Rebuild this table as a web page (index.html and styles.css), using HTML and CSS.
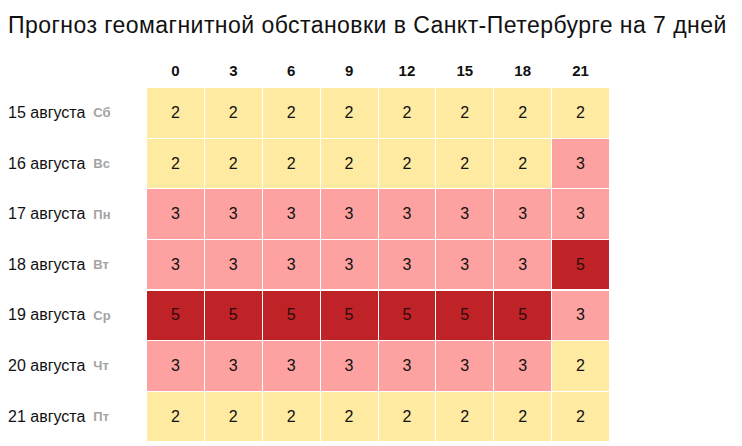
FILE: index.html
```html
<!DOCTYPE html>
<html lang="ru">
<head>
<meta charset="utf-8">
<title>Прогноз геомагнитной обстановки</title>
<link rel="stylesheet" href="styles.css">
</head>
<body>
<div class="page">
  <h1 class="title">Прогноз геомагнитной обстановки в Санкт-Петербурге на 7 дней</h1>
  <div class="grid">
    <div class="corner"></div>
    <div class="hour">0</div><div class="hour">3</div><div class="hour">6</div><div class="hour">9</div><div class="hour">12</div><div class="hour">15</div><div class="hour">18</div><div class="hour">21</div>

    <div class="day">15 августа <span class="wd">Сб</span></div>
    <div class="c k2">2</div><div class="c k2">2</div><div class="c k2">2</div><div class="c k2">2</div><div class="c k2">2</div><div class="c k2">2</div><div class="c k2">2</div><div class="c k2">2</div>

    <div class="day">16 августа <span class="wd">Вс</span></div>
    <div class="c k2">2</div><div class="c k2">2</div><div class="c k2">2</div><div class="c k2">2</div><div class="c k2">2</div><div class="c k2">2</div><div class="c k2">2</div><div class="c k3">3</div>

    <div class="day">17 августа <span class="wd">Пн</span></div>
    <div class="c k3">3</div><div class="c k3">3</div><div class="c k3">3</div><div class="c k3">3</div><div class="c k3">3</div><div class="c k3">3</div><div class="c k3">3</div><div class="c k3">3</div>

    <div class="day">18 августа <span class="wd">Вт</span></div>
    <div class="c k3">3</div><div class="c k3">3</div><div class="c k3">3</div><div class="c k3">3</div><div class="c k3">3</div><div class="c k3">3</div><div class="c k3">3</div><div class="c k5">5</div>

    <div class="day">19 августа <span class="wd">Ср</span></div>
    <div class="c k5">5</div><div class="c k5">5</div><div class="c k5">5</div><div class="c k5">5</div><div class="c k5">5</div><div class="c k5">5</div><div class="c k5">5</div><div class="c k3">3</div>

    <div class="day">20 августа <span class="wd">Чт</span></div>
    <div class="c k3">3</div><div class="c k3">3</div><div class="c k3">3</div><div class="c k3">3</div><div class="c k3">3</div><div class="c k3">3</div><div class="c k3">3</div><div class="c k2">2</div>

    <div class="day">21 августа <span class="wd">Пт</span></div>
    <div class="c k2">2</div><div class="c k2">2</div><div class="c k2">2</div><div class="c k2">2</div><div class="c k2">2</div><div class="c k2">2</div><div class="c k2">2</div><div class="c k2">2</div>
  </div>
</div>
</body>
</html>
```

FILE: styles.css
```css
html, body {
  margin: 0;
  padding: 0;
  background: #ffffff;
}

.page {
  padding: 12px 0 0 8px;
  font-family: "Liberation Sans", Arial, sans-serif;
  color: #111111;
}

.title {
  margin: 0;
  font-size: 23px;
  line-height: 26px;
  letter-spacing: 0.45px;
  font-weight: normal;
  color: #111111;
  white-space: nowrap;
}

.grid {
  margin-top: 25px;
  display: grid;
  grid-template-columns: 138px repeat(8, 56.875px);
  grid-template-rows: 24px repeat(7, 49.43px);
  column-gap: 1px;
  row-gap: 1.2px;
}

.hour {
  font-size: 15px;
  font-weight: bold;
  line-height: 16px;
  text-align: center;
  color: #111111;
}

.day {
  display: flex;
  align-items: center;
  font-size: 16px;
  white-space: nowrap;
  color: #111111;
}

.wd {
  margin-left: 8px;
  font-size: 13px;
  font-weight: bold;
  color: #a3a3a3;
}

.c {
  display: flex;
  align-items: center;
  justify-content: center;
  font-size: 16px;
  color: #111111;
}

.k2 { background: #feeaa1; }
.k3 { background: #fda1a1; }
.k5 { background: #bf2327; color: #2a0a0a; }
```
